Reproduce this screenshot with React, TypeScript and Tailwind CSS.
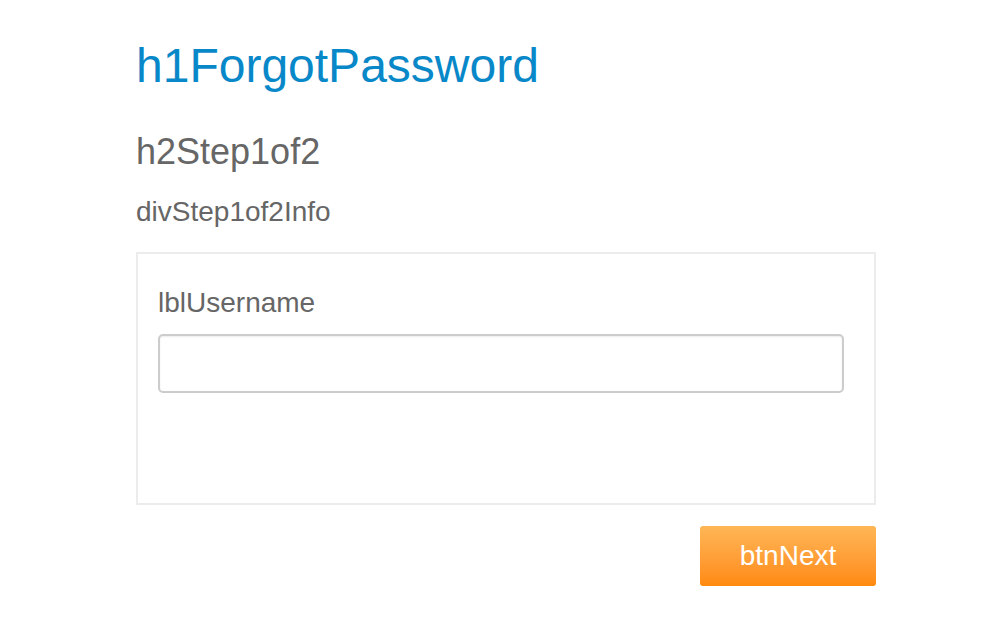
export default function App() {
  return (
    <div className="min-h-[618px] bg-white font-['Liberation_Sans',Arial,sans-serif]">
      <div className="ml-[136px] w-[740px] pt-[42px]">
        <h1 className="text-[48px] leading-[48px] text-[#0888c8]">h1ForgotPassword</h1>
        <h2 className="mt-[44px] text-[36px] leading-[36px] text-[#666666]">h2Step1of2</h2>
        <div className="mt-[28px] text-[28px] leading-[28px] text-[#666666]">divStep1of2Info</div>

        {/* form box */}
        <div className="mt-[26px] h-[253px] border-2 border-[#ececec] px-[20px] pt-[35px]">
          <label className="block text-[28px] leading-[28px] text-[#666666]">lblUsername</label>
          <input
            type="text"
            className="mt-[17px] block h-[59px] w-[686px] rounded-[5px] border-2 border-[#cccccc] bg-white px-3 text-[24px] text-[#555] shadow-[inset_0_1px_2px_rgba(0,0,0,0.08)] outline-none"
          />
        </div>

        <div className="mt-[21px] flex justify-end">
          <button className="h-[60px] w-[176px] rounded-[3px] bg-gradient-to-b from-[#ffb655] to-[#ff8a0a] text-[28px] leading-[28px] text-white">
            btnNext
          </button>
        </div>
      </div>
    </div>
  );
}
